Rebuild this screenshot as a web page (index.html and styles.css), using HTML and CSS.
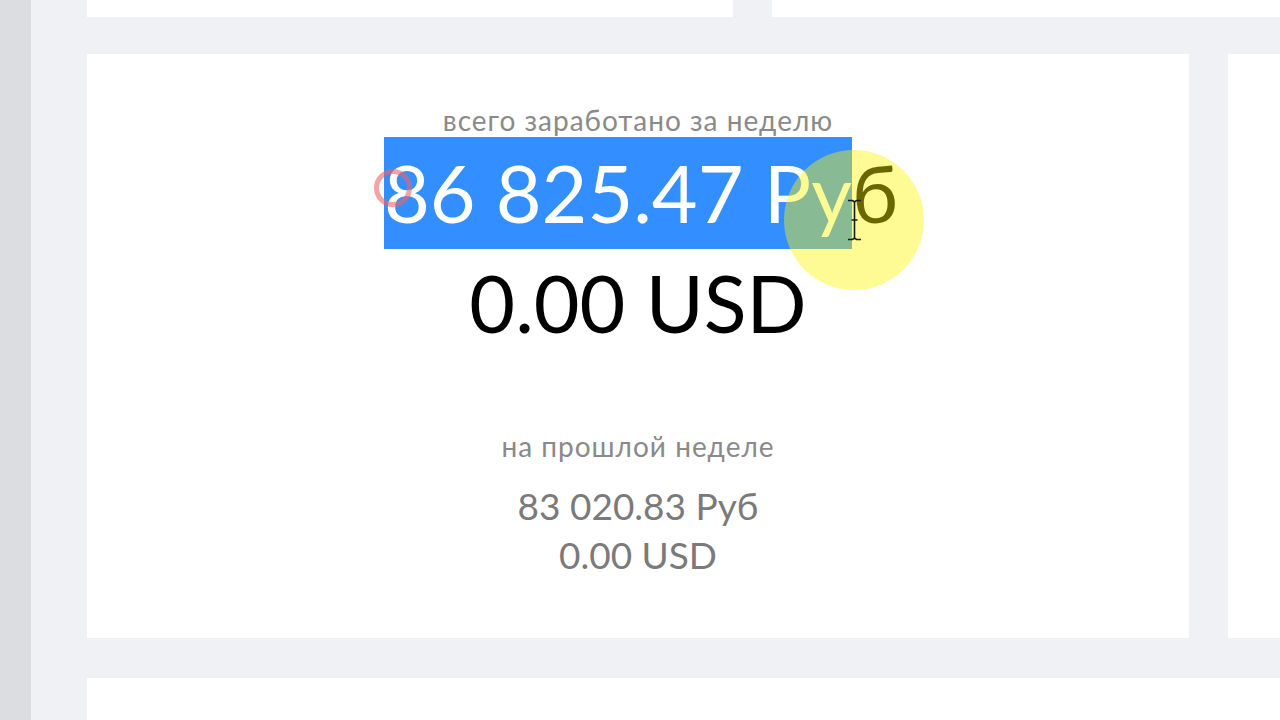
FILE: index.html
```html
<!DOCTYPE html>
<html lang="ru">
<head>
<meta charset="utf-8">
<title>Статистика</title>
<link rel="stylesheet" href="styles.css">
</head>
<body>
<div class="layout">
  <aside class="rail"></aside>
  <main class="content">
    <div class="row row-top">
      <div class="card"></div>
      <div class="card"></div>
    </div>
    <div class="row row-mid">
      <section class="card stats">
        <div class="label">всего заработано за неделю</div>
        <div class="big">
          <div class="big-line big-line-rub"><span class="sel">86 825.47 Ру</span>б<span class="click"></span><span class="halo"></span><svg class="ibeam" width="15" height="42" viewBox="0 0 15 42"><path d="M1 1.5h4.5l2 1.5 2-1.5h4.5M7.5 3v36M1 40.5h4.5l2-1.5 2 1.5h4.5M4.5 21h6" fill="none" stroke="#1a1a1a" stroke-width="1.6"/></svg></div>
          <div class="big-line">0.00 USD</div>
        </div>
        <div class="label label-prev">на прошлой неделе</div>
        <div class="prev">
          <div>83 020.83 Руб</div>
          <div>0.00 USD</div>
        </div>
      </section>
      <div class="card"></div>
    </div>
    <div class="row row-bottom">
      <div class="card"></div>
    </div>
  </main>
</div>
</body>
</html>
```
FILE: styles.css
```css
html, body {
  margin: 0;
  padding: 0;
  height: 100%;
  overflow: hidden;
  background: #f0f1f4;
  font-family: "Lato", "Open Sans", "Noto Sans", sans-serif;
}
.layout {
  display: flex;
  height: 720px;
  overflow: hidden;
}
.rail {
  width: 31px;
  flex: none;
  background: #dcdde0;
}
.content {
  flex: 1;
  padding-left: 56px;
  display: flex;
  flex-direction: column;
  gap: 37px;
  margin-top: -100px;
}
.row {
  display: grid;
  column-gap: 39px;
}
.row-top {
  grid-template-columns: 646px 1fr;
  height: 117px;
  flex: none;
}
.row-mid {
  grid-template-columns: 1102px 1fr;
  height: 584px;
  flex: none;
}
.row-bottom {
  grid-template-columns: 1fr;
  height: 200px;
  flex: none;
  margin-top: 3px;
}
.card {
  background: #ffffff;
}
.stats {
  display: flex;
  flex-direction: column;
  align-items: center;
  text-align: center;
  padding-top: 51px;
}
.label {
  font-size: 28px;
  letter-spacing: 1px;
  line-height: 30px;
  color: #8a8a8a;
}
.big {
  margin-top: 3px;
  font-size: 79px;
  line-height: 110px;
  color: #000;
  display: flex;
  flex-direction: column;
  align-items: center;
}
.big-line {
  position: relative;
}
.big-line-rub {
  padding-left: 6px;
}
.sel {
  background: #338fff;
  color: #fff;
  padding: 8px 0 9px;
}
.halo {
  position: absolute;
  left: 476px;
  top: 82px;
  width: 140px;
  height: 140px;
  margin: -70px 0 0 -70px;
  border-radius: 50%;
  background: rgba(255, 246, 0, 0.42);
  pointer-events: none;
}
.click {
  position: absolute;
  left: -4px;
  top: 31px;
  width: 38px;
  height: 38px;
  border: 5px solid rgba(236, 100, 100, 0.6);
  border-radius: 50%;
  box-sizing: border-box;
}
.ibeam {
  position: absolute;
  left: 469px;
  top: 61px;
}
.label-prev {
  margin-top: 73px;
}
.prev {
  margin-top: 20px;
  font-size: 37px;
  line-height: 49px;
  color: #7a7a7a;
}
```
